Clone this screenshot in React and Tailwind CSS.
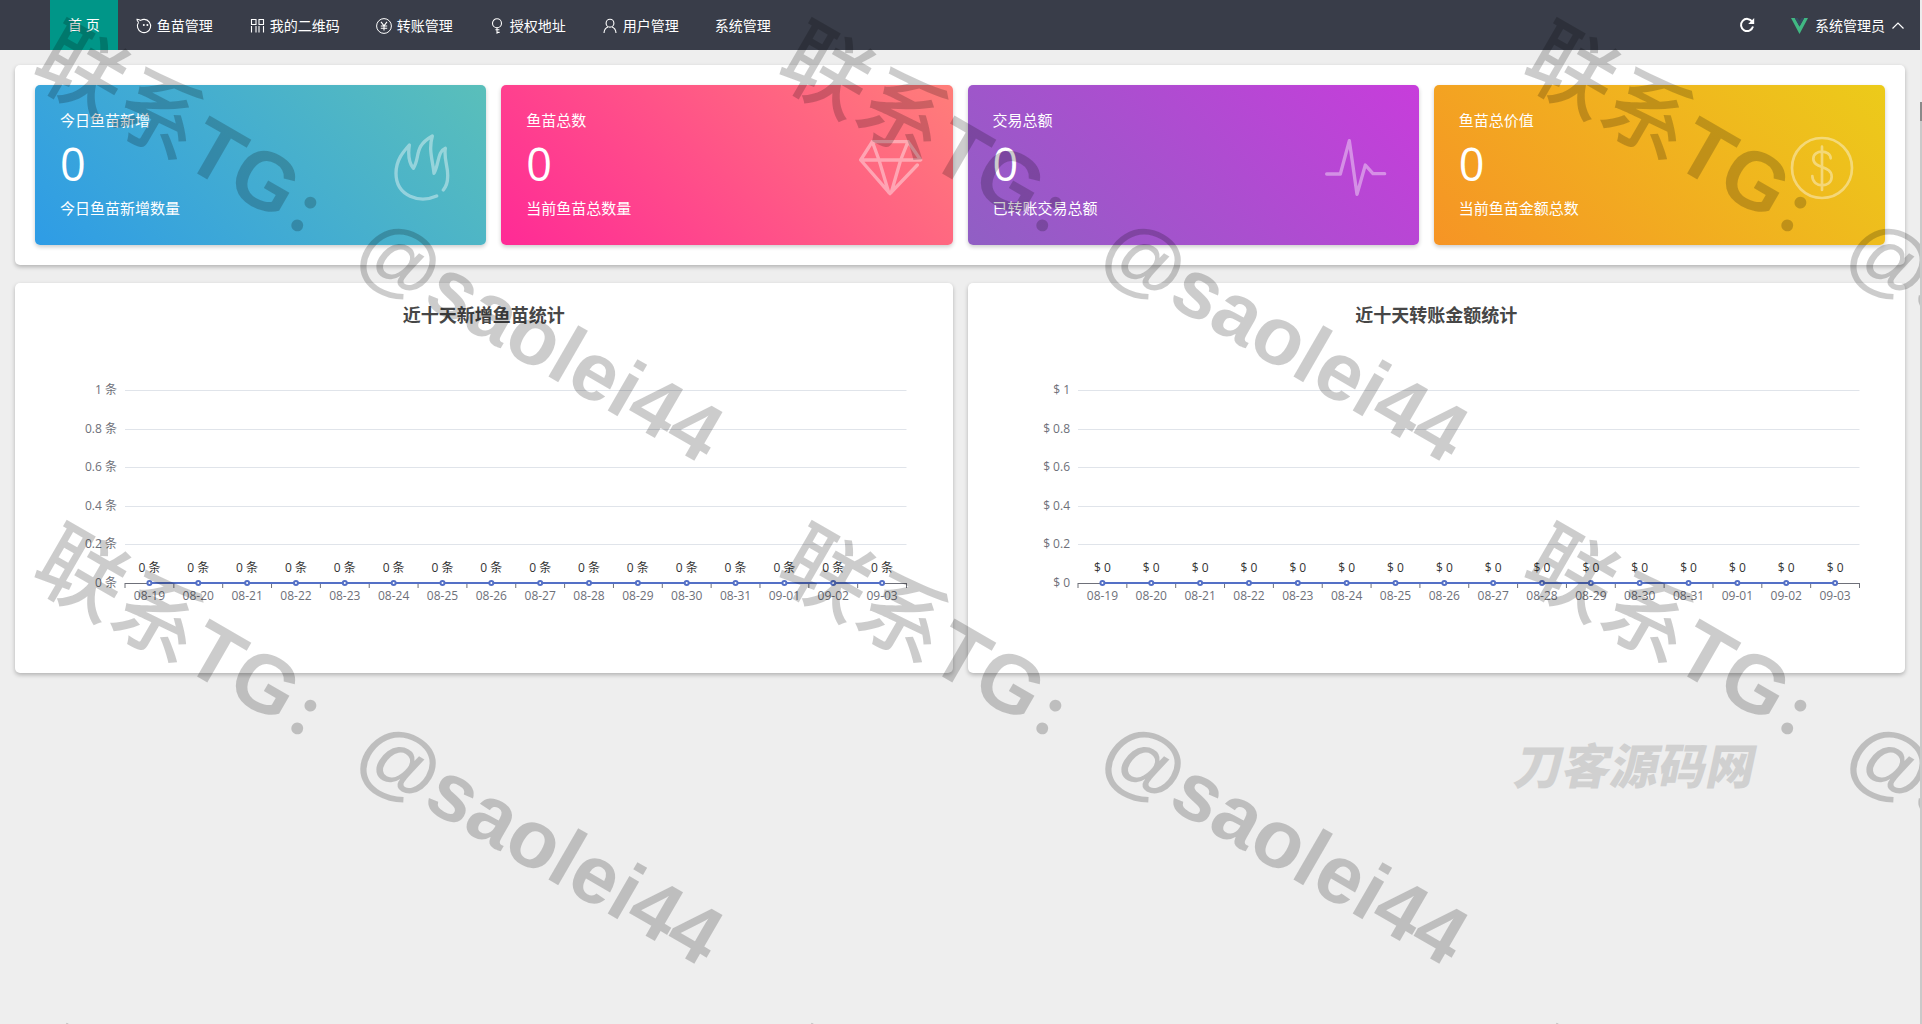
import React from "react";

const days = [
  "08-19", "08-20", "08-21", "08-22", "08-23", "08-24", "08-25", "08-26",
  "08-27", "08-28", "08-29", "08-30", "08-31", "09-01", "09-02", "09-03",
];

const ticks = ["1", "0.8", "0.6", "0.4", "0.2", "0"];

function NavIcon({ children }) {
  return (
    <svg
      className="h-4 w-4 shrink-0"
      viewBox="0 0 16 16"
      fill="none"
      stroke="currentColor"
      strokeWidth="1.1"
    >
      {children}
    </svg>
  );
}

const navItems = [
  {
    label: "鱼苗管理",
    icon: (
      <NavIcon>
        <path d="M2.6 4.2 A6.6 6.6 0 1 0 8.4 1.4 C7 1.3 5.6 1.8 4.6 2.4 C3.6 2 2.4 1.2 1 1.2 C1 2.4 1.6 3.6 2.6 4.2" />
        <circle cx="7.8" cy="7" r="1" fill="currentColor" stroke="none" />
        <circle cx="11.4" cy="7" r="1" fill="currentColor" stroke="none" />
      </NavIcon>
    ),
  },
  {
    label: "我的二维码",
    icon: (
      <NavIcon>
        <path d="M2.5 1.5h4.5v5h-4.5z M10 1.5h4.5v5h-4.5z" />
        <path d="M2.5 8v6.5 M7 8v6.5 M10 8v6.5 M14.5 8v6.5" />
      </NavIcon>
    ),
  },
  {
    label: "转账管理",
    icon: (
      <NavIcon>
        <circle cx="8" cy="8" r="7.4" strokeWidth="1" />
        <path d="M5 3.8l3 4 3-4 M8 7.8v4.6 M4.8 8h6.4 M4.8 10.2h6.4" />
      </NavIcon>
    ),
  },
  {
    label: "授权地址",
    icon: (
      <NavIcon>
        <circle cx="8" cy="5.2" r="4.5" />
        <path d="M8 9.7v6 M6.4 11.8h4 M8 14.4h2.6" />
      </NavIcon>
    ),
  },
  {
    label: "用户管理",
    icon: (
      <NavIcon>
        <circle cx="8" cy="5.2" r="3.9" />
        <path d="M2 15c.2-3.4 1.6-5.2 4-6 M14 15c-.2-3.4-1.6-5.2-4-6" />
      </NavIcon>
    ),
  },
  { label: "系统管理", icon: null },
];

function Header() {
  return (
    <header className="flex h-[50px] items-center justify-between bg-[#393d49] pl-[50px] pr-4 text-sm text-white">
      <nav className="flex h-full items-center">
        <a href="#home" className="flex h-full items-center bg-[#009688] px-[18px]">
          首 页
        </a>
        {navItems.map((item) => (
          <a
            key={item.label}
            href="#menu"
            className="flex h-full items-center gap-[5px] px-[18px] pt-px"
          >
            {item.icon}
            {item.label}
          </a>
        ))}
      </nav>

      <div className="flex items-center gap-9">
        <button type="button" aria-label="刷新">
          <svg className="h-4 w-4" viewBox="0 0 16 16" fill="none">
            <path
              d="M13.2 4.6A6.1 6.1 0 1 0 14 9.6"
              stroke="currentColor"
              strokeWidth="2"
            />
            <path d="M15.2 1v6h-6z" fill="currentColor" />
          </svg>
        </button>
        <button type="button" className="flex items-center gap-[7px] pt-px">
          <svg className="h-[17px] w-[17px]" viewBox="0 0 17 17">
            <path d="M0 1h3.8l4.7 8.6L13.2 1H17L8.5 17z" fill="#41b883" />
            <path d="M3.8 1h3l1.7 3 1.7-3h3L8.5 9.6z" fill="#35495e" />
          </svg>
          系统管理员
          <svg
            className="h-3 w-3"
            viewBox="0 0 12 12"
            fill="none"
            stroke="currentColor"
            strokeWidth="1.2"
          >
            <path d="M0.5 8.5L6 3l5.5 5.5" />
          </svg>
        </button>
      </div>
    </header>
  );
}

const stats = [
  {
    title: "今日鱼苗新增",
    note: "今日鱼苗新增数量",
    bg: "bg-[linear-gradient(45deg,#2e9ce6,#5abfba)]",
    icon: (
      <path d="M149 201C99 223 27 203 27 133C27 93 49 68 67 48C63 75 67 103 79 118C101 83 79 53 136 21C124 63 137 93 141 133C157 103 151 68 175 58C170 93 184 113 182 143C182 158 177 173 169 183" />
    ),
  },
  {
    title: "鱼苗总数",
    note: "当前鱼苗总数量",
    bg: "bg-[linear-gradient(45deg,#ff2a96,#ff7e79)]",
    icon: (
      <path d="M190 108L108 194L20 93L55 38H162L200 93H20M55 38L75 93L104 190M162 38L140 93L112 190" />
    ),
  },
  {
    title: "交易总额",
    note: "已转账交易总额",
    bg: "bg-[linear-gradient(45deg,#905fc4,#c73ddb)]",
    icon: <path d="M20 135H61L88 35L111 196L136 108L159 134H194" />,
  },
  {
    title: "鱼苗总价值",
    note: "当前鱼苗金额总数",
    bg: "bg-[linear-gradient(45deg,#f69425,#eccb1a)]",
    icon: (
      <g strokeWidth="8">
        <circle cx="108" cy="117" r="90" />
        <path d="M108 53V183M134 88C134 62 82 60 82 89C82 120 137 108 137 143C137 178 79 178 79 141" />
      </g>
    ),
  },
];

function StatCard({ title, note, bg, icon }) {
  return (
    <div
      className={`flex h-40 items-center justify-between rounded-[5px] pl-[25px] pr-[27px] text-white shadow-[0_2px_4px_rgba(0,0,0,0.2)] ${bg}`}
    >
      <div className="flex flex-col pb-0.5 text-[15px] leading-5">
        <p>{title}</p>
        <p className="py-1 text-[45px] leading-[60px]">0</p>
        <p>{note}</p>
      </div>
      <svg
        className="h-[72px] w-[72px] opacity-40"
        viewBox="0 0 216 216"
        fill="none"
        stroke="currentColor"
        strokeWidth="10"
        strokeLinecap="round"
        strokeLinejoin="round"
      >
        {icon}
      </svg>
    </div>
  );
}

function ChartCard({ title, format }) {
  const step = 100 / days.length;
  const middle = (i) => `${(i + 0.5) * step}%`;

  return (
    <section className="h-[390px] rounded-[5px] bg-white pl-[110px] pr-[46px] shadow-[0_2px_4px_rgba(0,0,0,0.25)]">
      <h2 className="-ml-16 pt-5 text-center text-lg leading-6 font-bold text-[#464646]">
        {title}
      </h2>
      <svg className="mt-[63px] h-[220px] w-full overflow-visible text-xs">
        {/* Value axis */}
        {ticks.map((tick, i) => {
          const y = Math.round(i * 38.6) + 0.5;
          return (
            <g key={tick}>
              {tick !== "0" && (
                <line x1="0" x2="100%" y1={y} y2={y} stroke="#e0e4ea" />
              )}
              <text x="-8" y={y + 3} textAnchor="end" fill="#6e7079">
                {format(tick)}
              </text>
            </g>
          );
        })}

        {/* Date axis */}
        <line x1="0" x2="100%" y1="193.5" y2="193.5" stroke="#6e7079" />
        {[...days, "end"].map((day, i) => (
          <line
            key={day}
            x1={`${i * step}%`}
            x2={`${i * step}%`}
            y1="193"
            y2="198"
            stroke="#6e7079"
          />
        ))}

        {/* Series */}
        <line
          x1={middle(0)}
          x2={middle(days.length - 1)}
          y1="193"
          y2="193"
          stroke="#5470c6"
          strokeWidth="2"
        />
        {days.map((day, i) => (
          <g key={day} textAnchor="middle">
            <circle
              cx={middle(i)}
              cy="193"
              r="2"
              fill="#fff"
              stroke="#5470c6"
              strokeWidth="2"
            />
            <text x={middle(i)} y="182" fill="#333">
              {format("0")}
            </text>
            <text x={middle(i)} y="210" fill="#6e7079">
              {day}
            </text>
          </g>
        ))}
      </svg>
    </section>
  );
}

function Watermark() {
  return (
    <div className="pointer-events-none absolute inset-0 overflow-hidden">
      <div className="grid auto-rows-[503px] grid-cols-[repeat(3,745px)]">
        {Array.from({ length: 9 }, (_, i) => (
          <div key={i} className="pt-3 pl-[65px]">
            <p className="w-max origin-top-left rotate-30 font-['Liberation_Sans','Noto_Sans_CJK_SC',sans-serif] text-[82px] leading-none font-bold whitespace-nowrap text-black/20">
              <span className="text-[88px] font-medium">联系</span>TG
              <span className="pr-6 pl-1 text-[56px] font-black">：</span>
              @saolei44
            </p>
          </div>
        ))}
      </div>
      <p className="absolute right-[166px] bottom-[234px] -skew-x-12 text-5xl leading-none font-black text-[#d0d0d0]">
        刀客源码网
      </p>
    </div>
  );
}

function App() {
  return (
    <div className="relative min-h-screen overflow-hidden bg-[#eee] pr-0.5 font-['Open_Sans','Noto_Sans_CJK_SC',sans-serif]">
      <Header />
      <main className="flex flex-col gap-[18px] p-[15px]">
        <section className="grid grid-cols-4 gap-[15px] rounded-[5px] bg-white p-5 shadow-[0_2px_4px_rgba(0,0,0,0.25)]">
          {stats.map((stat) => (
            <StatCard key={stat.title} {...stat} />
          ))}
        </section>
        <div className="grid grid-cols-2 gap-[15px]">
          <ChartCard title="近十天新增鱼苗统计" format={(v) => `${v} 条`} />
          <ChartCard title="近十天转账金额统计" format={(v) => `$ ${v}`} />
        </div>
      </main>
      <Watermark />
      {/* Scroll track */}
      <div className="absolute inset-y-0 right-0 w-0.5 bg-[linear-gradient(#ececec_102px,#8a8a8a_102px,#8a8a8a_121px,#c9c9c9_121px)]" />
    </div>
  );
}

export default App;
